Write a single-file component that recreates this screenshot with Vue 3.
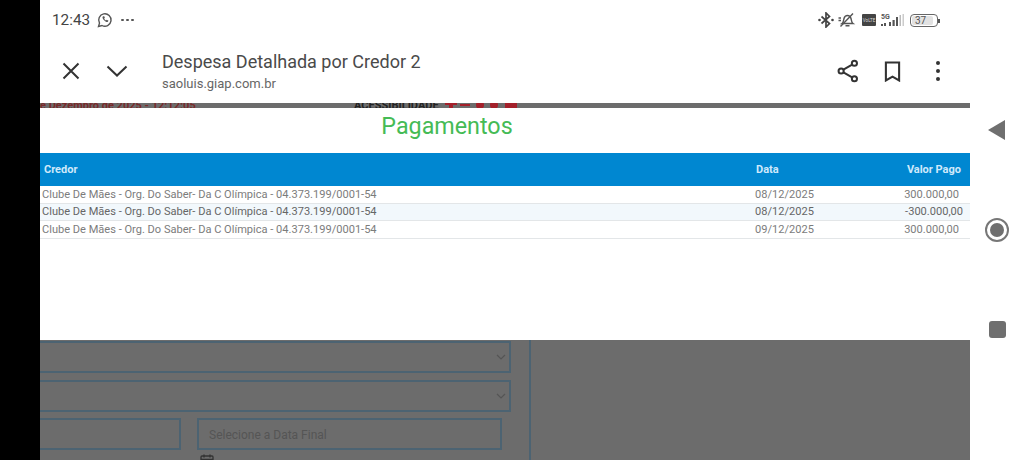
<script setup>
const rows = [
  { credor: 'Clube De Mães - Org. Do Saber- Da C Olímpica - 04.373.199/0001-54', data: '08/12/2025', valor: '300.000,00' },
  { credor: 'Clube De Mães - Org. Do Saber- Da C Olímpica - 04.373.199/0001-54', data: '08/12/2025', valor: '-300.000,00', alt: true },
  { credor: 'Clube De Mães - Org. Do Saber- Da C Olímpica - 04.373.199/0001-54', data: '09/12/2025', valor: '300.000,00' },
]
</script>

<template>
  <div class="screen">
    <div class="bezel"></div>
    <div class="device">
      <header class="chrome">
        <div class="status">
          <div class="status-left">
            <span class="clock">12:43</span>
            <svg class="wa" viewBox="0 0 16 16" width="16" height="16" fill="none" stroke="#555" stroke-width="1.400">
              <path d="M1.500 14.500l1-3.400A6.200 6.200 0 1 1 5 13.500z" />
              <path d="M5.600 4.800c-.8 1.800 2.800 5.600 5 5.300l.9-1.400-1.800-1-.7.700c-.8-.4-1.500-1.200-1.800-2l.7-.8-.9-1.700z" fill="#555" stroke="none" />
            </svg>
            <span class="more-dots"><i></i><i></i><i></i></span>
          </div>
          <div class="status-right">
            <svg viewBox="0 0 16 16" width="16" height="16" fill="none" stroke="#444" stroke-width="1.700">
              <path d="M3.500 4.500l8 7L8 15V1l3.500 3.500-8 7" />
              <circle cx="1.500" cy="8" r="1.300" fill="#444" stroke="none" />
              <circle cx="14.500" cy="8" r="1.300" fill="#444" stroke="none" />
            </svg>
            <svg viewBox="0 0 18 16" width="18" height="16" fill="none" stroke="#555" stroke-width="1.400">
              <path d="M4 11.500c1.500-1 1.500-3 2-5 .5-2 2-3 3.500-3s3 1 3.500 3c.5 2 .5 4 2 5z" />
              <path d="M7.500 13.800h4M2.500 14.500L15 1.500" />
              <path d="M.5 6h2.500M.5 8.500h2.500" />
            </svg>
            <span class="volte">VoLTE</span>
            <svg viewBox="0 0 25 16" width="25" height="16">
              <text x="1" y="6.500" class="fiveg">5G</text>
              <rect x="1" y="12" width="2" height="2" fill="#555" />
              <rect x="4" y="11" width="2" height="3" fill="#555" />
              <rect x="9" y="10" width="2" height="4" fill="#555" />
              <rect x="12.500" y="8" width="2.200" height="6" fill="#555" />
              <rect x="16" y="5" width="2" height="9" fill="#555" />
              <rect x="19.500" y="3" width="1.500" height="11" fill="#bbb" />
              <rect x="22.500" y="2" width="1.500" height="12" fill="#ccc" />
            </svg>
            <span class="battery"><span class="battery-level">37</span></span>
          </div>
        </div>
        <div class="toolbar">
          <div class="tool-left">
            <svg viewBox="0 0 20 20" width="20" height="20" fill="none" stroke="#333" stroke-width="2">
              <path d="M2.500 2.500l15 15M17.500 2.500l-15 15" />
            </svg>
            <svg viewBox="0 0 24 20" width="24" height="20" fill="none" stroke="#333" stroke-width="2">
              <path d="M2.500 5.500L12 14.500l9.500-9" />
            </svg>
          </div>
          <div class="page-info">
            <div class="page-title">Despesa Detalhada por Credor 2</div>
            <div class="page-host">saoluis.giap.com.br</div>
          </div>
          <div class="tool-right">
            <svg viewBox="0 0 24 26" width="22" height="24" fill="none" stroke="#333" stroke-width="2.200">
              <circle cx="19" cy="4.500" r="2.800" />
              <circle cx="4.500" cy="13" r="2.800" />
              <circle cx="19" cy="21.500" r="2.800" />
              <path d="M7 11.500l9.500-5.500M7 14.500l9.500 5.500" />
            </svg>
            <svg viewBox="0 0 18 22" width="17" height="21" fill="none" stroke="#333" stroke-width="2.200">
              <path d="M2 1.500h14v19l-7-4-7 4z" />
            </svg>
            <span class="kebab"><i></i><i></i><i></i></span>
          </div>
        </div>
      </header>

      <div class="body">
        <main class="page">
          <div class="peek">
            <span class="peek-date">e Dezembro de 2025 - 12:12:05</span>
            <span class="peek-access">ACESSIBILIDADE</span>
            <span class="peek-icons">
              <svg viewBox="0 0 72 5" width="72" height="5" fill="#a3202a">
                <path d="M0 0h12v2H8v3H4V2H0z" />
                <rect x="15" y="1" width="10" height="2" />
                <circle cx="35" cy="2" r="4" />
                <circle cx="49" cy="2" r="4" />
                <rect x="60" y="0" width="12" height="5" />
              </svg>
            </span>
          </div>
          <section class="modal">
            <h1>Pagamentos</h1>
            <div class="table-head">
              <span class="col-credor">Credor</span>
              <span class="col-data">Data</span>
              <span class="col-valor">Valor Pago</span>
            </div>
            <div v-for="(r, i) in rows" :key="i" class="row" :class="{ alt: r.alt }">
              <span class="col-credor">{{ r.credor }}</span>
              <span class="col-data">{{ r.data }}</span>
              <span class="col-valor">{{ r.valor }}</span>
            </div>
          </section>
          <section class="backdrop">
            <div class="form">
              <div class="select"><svg viewBox="0 0 10 6" width="10" height="6" fill="none" stroke="#555" stroke-width="1.200"><path d="M1 1l4 4 4-4" /></svg></div>
              <div class="select"><svg viewBox="0 0 10 6" width="10" height="6" fill="none" stroke="#555" stroke-width="1.200"><path d="M1 1l4 4 4-4" /></svg></div>
              <div class="dates">
                <div class="date-field first"></div>
                <div class="date-wrap">
                  <div class="date-field">Selecione a Data Final</div>
                  <svg class="cal" viewBox="0 0 14 14" width="14" height="14" fill="none" stroke="#333" stroke-width="1.300"><rect x="1" y="2" width="12" height="11" rx="1" /><path d="M1 5.500h12M4 .5v3M10 .5v3" /></svg>
                </div>
              </div>
            </div>
            <div class="side-panel"></div>
          </section>
        </main>
        <nav class="sysnav">
          <span class="nav-back"></span>
          <span class="nav-home"></span>
          <span class="nav-recent"></span>
        </nav>
      </div>
    </div>
  </div>
</template>

<style>
html, body { margin: 0; background: #fff; }
</style>

<style scoped>
.screen { display: flex; width: 1024px; height: 460px; overflow: hidden; background: #fff; font-family: Roboto, "Liberation Sans", sans-serif; }
.bezel { width: 40px; flex: none; background: #000; }
.device { flex: 1; min-width: 0; display: flex; flex-direction: column; }

.chrome { height: 103px; flex: none; display: flex; flex-direction: column; background: #fff; }
.status { height: 40px; display: flex; justify-content: space-between; align-items: center; padding: 0 86px 0 12px; }
.status-left, .status-right { display: flex; align-items: center; }
.status-left { gap: 7px; }
.status-right { gap: 4px; }
.clock { font-size: 15.300px; color: #444; }
.more-dots { display: flex; gap: 2.500px; margin-left: 1px; }
.more-dots i { width: 2.500px; height: 2.500px; border-radius: 50%; background: #555; }
.volte { width: 14px; height: 12px; background: #444; border-radius: 1px; color: #ddd; font-size: 4.500px; display: flex; align-items: center; justify-content: center; overflow: hidden; margin: 0 0 0 2px; }
.fiveg { font: 700 7px Roboto, sans-serif; fill: #555; }
.battery { width: 26px; height: 11px; border: 1px solid #666; border-radius: 4px; position: relative; padding: 0; display: block; margin-left: 1px; }
.battery::after { content: ""; position: absolute; right: -3px; top: 4px; width: 2px; height: 4px; background: #555; }
.battery-level { display: block; width: 18px; height: 9px; margin: 1px; background: #e2e2e2; border-radius: 2px; font-size: 10px; line-height: 9px; color: #555; padding-left: 3px; }

.toolbar { flex: 1; display: flex; align-items: center; padding-bottom: 1px; }
.tool-left { display: flex; align-items: center; gap: 24px; padding-left: 21px; width: 122px; box-sizing: border-box; flex: none; }
.page-info { flex: 1; }
.page-title { font-size: 18px; line-height: 25px; color: #4a4a4a; }
.page-host { font-size: 13px; line-height: 20px; color: #666; }
.tool-right { display: flex; align-items: center; gap: 25px; padding-right: 84px; }
.kebab { display: flex; flex-direction: column; gap: 4px; margin-left: 10px; }
.kebab i { width: 4px; height: 4px; border-radius: 50%; background: #333; }

.body { flex: 1; display: flex; min-height: 0; }
.page { width: 930px; flex: none; display: flex; flex-direction: column; }

.peek { height: 5px; flex: none; background: #6c6c6c; position: relative; overflow: hidden; display: flex; align-items: flex-end; font-size: 11px; font-weight: 700; line-height: 5px; }
.peek-date { width: 314px; color: #7a2a2a; white-space: nowrap; }
.peek-access { width: 91px; color: #222; white-space: nowrap; }
.peek-icons { display: flex; }
.peek-icons svg { display: block; }

.modal { height: 232px; flex: none; background: #fff; color: #7c7c7c; }
.modal h1 { margin: 0; height: 45px; width: 814px; text-align: center; font-size: 23.300px; font-weight: 400; line-height: 37px; color: #45bb55; }
.table-head { height: 33px; background: #0087d1; display: flex; align-items: center; color: #cfe9fb; font-size: 11px; font-weight: 700; }
.table-head .col-credor { padding-left: 4px; }
.row { height: 16.500px; display: flex; align-items: center; font-size: 11.070px; border-bottom: 1px solid #e3e6e8; box-sizing: content-box; }
.row.alt { background: #f2f8fc; color: #666; }
.col-credor { width: 706px; flex: none; box-sizing: border-box; padding-left: 2px; white-space: nowrap; }
.col-data { width: 150px; flex: none; padding-left: 9px; box-sizing: border-box; }
.table-head .col-data { padding-left: 10px; }
.col-valor { flex: 1; text-align: right; padding-right: 11px; }
.row.alt .col-valor { padding-right: 7px; }
.table-head .col-valor { padding-right: 9px; }

.backdrop { flex: 1; min-height: 0; background: #6c6c6c; display: flex; }
.form { width: 471px; padding-top: 1px; display: flex; flex-direction: column; gap: 7px; flex: none; }
.select { height: 28px; flex: none; border: 2px solid #4c6372; border-left: 0; display: flex; align-items: center; justify-content: flex-end; padding-right: 3px; }
.dates { display: flex; gap: 16px; margin-top: -1px; }
.date-field { height: 28px; border: 2px solid #4c6372; box-sizing: content-box; color: #555; font-size: 12px; line-height: 30px; padding-left: 10px; }
.date-field.first { width: 139px; border-left: 0; padding-left: 0; }
.date-wrap { width: 305px; }
.cal { display: block; margin: 4px 0 0 3px; }
.side-panel { margin-left: 18px; border-left: 2px solid #4c6372; flex: 1; }

.sysnav { flex: 1; position: relative; }
.nav-back { position: absolute; left: 18px; top: 17px; width: 0; height: 0; border-style: solid; border-width: 10px 17px 10px 0; border-color: transparent #6f6f6f transparent transparent; }
.nav-home { position: absolute; left: 15px; top: 115px; width: 24px; height: 24px; box-sizing: border-box; border: 2px solid #777; border-radius: 50%; }
.nav-home::after { content: ""; position: absolute; left: 3px; top: 3px; width: 14px; height: 14px; border-radius: 50%; background: #6f6f6f; }
.nav-recent { position: absolute; left: 19px; top: 218px; width: 17px; height: 17px; border-radius: 3px; background: #6f6f6f; }
</style>
